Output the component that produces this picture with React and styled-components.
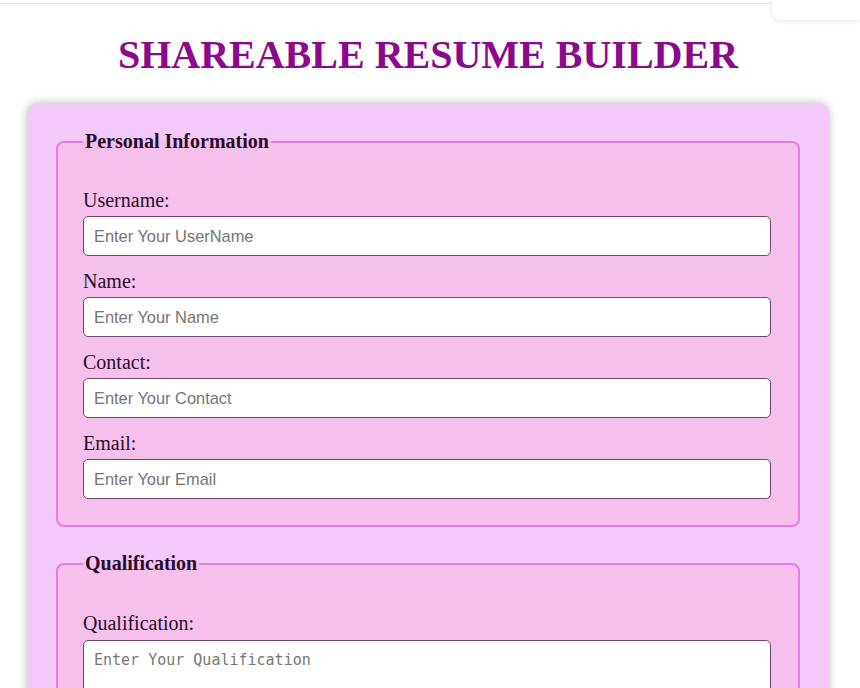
import React from 'react';
import styled, { createGlobalStyle } from 'styled-components';

const GlobalStyle = createGlobalStyle`
  body {
    margin: 0;
    background: #ffffff;
    font-family: "Liberation Serif", "Times New Roman", serif;
  }
`

const Page = styled.div`
  position: relative;
  padding: 0 31px 40px 27px;
  border-top: 1px solid #e2e2e2;
  margin-top: 3px;
`

const CornerPanel = styled.div`
  position: absolute;
  top: -4px;
  right: 0;
  width: 88px;
  height: 20px;
  background: #ffffff;
  border-bottom-left-radius: 9px;
  box-shadow: 0 1px 5px rgba(0, 0, 0, 0.12);
`

const Title = styled.h1`
  margin: 0;
  padding: 27px 0 25px;
  text-align: center;
  font-size: 40px;
  font-weight: bold;
  color: #8b0a8b;
`

const Card = styled.form`
  max-width: 744px;
  margin: 0 auto;
  padding: 27px 29px 30px;
  background: #f2c9f8;
  border-radius: 10px;
  box-shadow: 0 0 9px rgba(60, 70, 60, 0.35);
`

const Section = styled.fieldset`
  margin: 0 0 25px;
  padding: ${p => p.$top || 36}px 27px 26px 25px;
  background: #f5c1ec;
  border: 2px solid #ec78e5;
  border-radius: 8px;
  display: flex;
  flex-direction: column;
  gap: 14px;
`

const Legend = styled.legend`
  padding: 0 2px;
  font-size: 20px;
  font-weight: bold;
  color: #2a0c2a;
`

const Field = styled.div`
  display: flex;
  flex-direction: column;
  gap: ${p => p.$gap || 4}px;
`

const Label = styled.label`
  font-size: 20px;
  color: #2a0c2a;
`

const Input = styled.input`
  box-sizing: border-box;
  width: 100%;
  height: 40px;
  padding: 0 10px;
  border: 1px solid #6e486e;
  border-radius: 5px;
  background: #ffffff;
  font-family: "Liberation Sans", Arial, sans-serif;
  font-size: 16.4px;
  outline: none;
  &::placeholder {
    color: #757575;
  }
`

const TextArea = styled.textarea`
  box-sizing: border-box;
  width: 100%;
  height: 90px;
  padding: 10px 10px;
  border: 1px solid #6e486e;
  border-radius: 5px;
  background: #ffffff;
  font-family: "DejaVu Sans Mono", "Liberation Mono", monospace;
  font-size: 15px;
  resize: vertical;
  outline: none;
  &::placeholder {
    color: #777777;
  }
`

const personalFields = [
  { id: 'username', label: 'Username:', placeholder: 'Enter Your UserName' },
  { id: 'name', label: 'Name:', placeholder: 'Enter Your Name' },
  { id: 'contact', label: 'Contact:', placeholder: 'Enter Your Contact' },
  { id: 'email', label: 'Email:', placeholder: 'Enter Your Email' },
]

const App = () => {
  return (
    <Page>
      <GlobalStyle />
      <CornerPanel />
      <Title>SHAREABLE RESUME BUILDER</Title>
      <Card onSubmit={e => e.preventDefault()}>
        <Section>
          <Legend>Personal Information</Legend>
          {personalFields.map(f => (
            <Field key={f.id}>
              <Label htmlFor={f.id}>{f.label}</Label>
              <Input id={f.id} type="text" placeholder={f.placeholder} />
            </Field>
          ))}
        </Section>
        <Section $top={37}>
          <Legend>Qualification</Legend>
          <Field $gap={5}>
            <Label htmlFor="qualification">Qualification:</Label>
            <TextArea id="qualification" placeholder="Enter Your Qualification" />
          </Field>
        </Section>
      </Card>
    </Page>
  );
}

export default App;
